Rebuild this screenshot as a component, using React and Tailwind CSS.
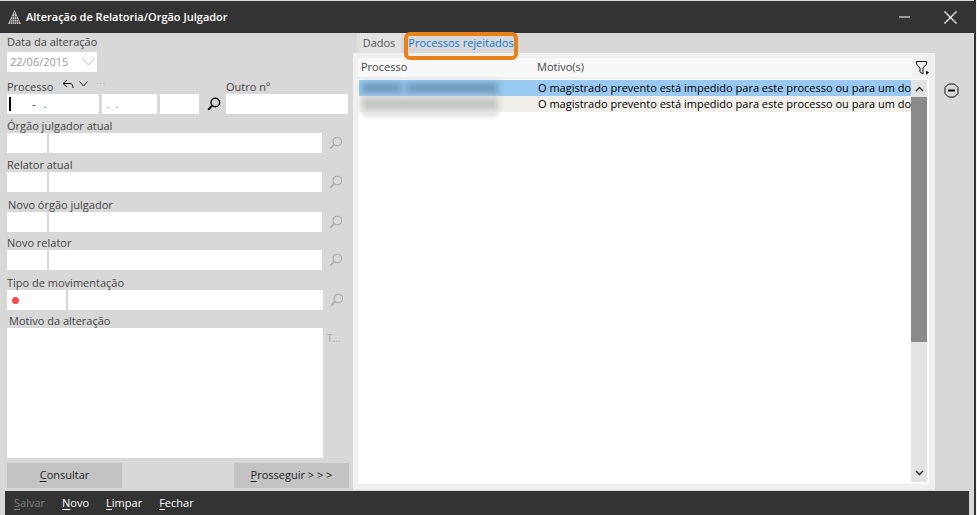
const font = { fontFamily: '"Open Sans", "Noto Sans", sans-serif' };

function Lens({ dark = false }) {
  return (
    <svg width="14" height="14" viewBox="0 0 14 14" fill="none" stroke={dark ? "#111" : "#a9a9a9"} strokeWidth={dark ? 1.4 : 1.1}>
      <circle cx="8.3" cy="5.5" r="4.3" />
      <path d="M5.2 8.6L1.2 12.8" strokeWidth={dark ? 2 : 1.6} />
    </svg>
  );
}

function Label({ children, className = "" }) {
  return <div className={`text-[11px] leading-[14px] text-[#444] whitespace-nowrap ${className}`}>{children}</div>;
}

function LookupRow({ first = "w-10", second = "w-[273px]", children }) {
  return (
    <div className="flex items-center">
      <div className={`${first} h-5 bg-white flex items-center`}>{children}</div>
      <div className={`${second} h-5 bg-white ml-0.5`} />
      <div className="ml-[7px]">
        <Lens />
      </div>
    </div>
  );
}

function U({ children }) {
  return <span className="underline underline-offset-2">{children}</span>;
}

function Row({ bg, children }) {
  return (
    <div className={`h-4 flex items-center ${bg}`}>
      <div className="w-[179px] shrink-0 pl-[3px] flex gap-1">{children}</div>
      <div className="text-[11px] leading-4 text-black whitespace-nowrap overflow-hidden">
        O magistrado prevento está impedido para este processo ou para um dos
      </div>
    </div>
  );
}

export default function App() {
  return (
    <div className="w-[977px] h-[515px] bg-[#f4f4f4] overflow-hidden" style={font}>
      <div className="w-[976px] h-[515px] border-r-2 border-[#333] bg-[#d8d8d8] flex flex-col">
        {/* title bar */}
        <div className="h-8 mt-px bg-[#333333] flex items-center shrink-0 pl-2 text-white">
          <svg width="13" height="14" viewBox="0 0 13 14" fill="#bdbdbd">
            <path d="M6.5 0L13 14H0Z" />
            <path d="M6.5 2V14M4.5 6V14M8.5 6V14M2.5 10V14M10.5 10V14M4 6.5H9M2.5 9.5H10.5M1.5 12H11.5" stroke="#555" strokeWidth="0.7" />
          </svg>
          <span className="ml-[5px] text-[11px] font-semibold">Alteração de Relatoria/Orgão Julgador</span>
          <svg className="ml-auto" width="11" height="2" viewBox="0 0 11 2">
            <path d="M0 1H11" stroke="#fff" strokeWidth="1" />
          </svg>
          <svg className="ml-[34px] mr-[17px]" width="13" height="13" viewBox="0 0 13 13">
            <path d="M0.5 0.5L12.5 12.5M12.5 0.5L0.5 12.5" stroke="#fff" strokeWidth="1.2" />
          </svg>
        </div>

        <div className="flex flex-1 min-h-0">
          {/* left form */}
          <div className="w-[353px] shrink-0 pl-[7px] pt-0.5">
            <Label>Data da alteração</Label>
            <div className="w-[90px] h-5 bg-white mt-[3px] flex items-center justify-between pl-[3px] pr-[2px] text-[11px] text-[#9a9a9a]">
              22/06/2015
              <svg width="13" height="8" viewBox="0 0 13 8" fill="none" stroke="#c4c4c4">
                <path d="M1 1L6.5 7L12 1" />
              </svg>
            </div>

            <div className="flex h-[22px] items-end">
              <Label className="w-[55px]">Processo</Label>
              <svg className="mb-[5px]" width="13" height="10" viewBox="0 0 13 10" fill="none" stroke="#111" strokeWidth="1">
                <path d="M5 1L1 4.5L5 8M1 4.5H8Q11 4.5 11 9" />
              </svg>
              <svg className="ml-1 mb-[7px]" width="9" height="6" viewBox="0 0 9 6" fill="none" stroke="#222">
                <path d="M0.5 0.5L4.5 5L8.5 0.5" />
              </svg>
              <span className="w-[138px] pl-2 mb-[4px] text-[9px] leading-3 tracking-[1px] text-[#a8a8a8]">···</span>
              <Label>Outro nº</Label>
            </div>
            <div className="flex items-center">
              <div className="w-[92px] h-5 bg-white flex items-center pl-[2px] text-[11px] text-[#333]">
                <div className="w-0.5 h-3.5 bg-black" />
                <span className="ml-[21px]">-</span>
                <span className="ml-2 text-[#0a6ab0]">.</span>
              </div>
              <div className="w-[55px] h-5 bg-white ml-[3px] pl-[5px] text-[11px] leading-5 text-[#888]">.&nbsp;&nbsp;.</div>
              <div className="w-[39px] h-5 bg-white ml-[3px]" />
              <div className="ml-2">
                <Lens dark />
              </div>
              <div className="w-[122px] h-5 bg-white ml-[5px]" />
            </div>

            <Label className="mt-[5px]">Órgão julgador atual</Label>
            <LookupRow />
            <Label className="mt-[5px]">Relator atual</Label>
            <LookupRow />
            <Label className="mt-[6px] ml-px">Novo órgão julgador</Label>
            <LookupRow />
            <Label className="mt-[4px]">Novo relator</Label>
            <LookupRow />
            <Label className="mt-[6px]">Tipo de movimentação</Label>
            <LookupRow first="w-[59px]" second="w-[255px]">
              <div className="ml-[5px] w-[7px] h-[7px] rounded-full bg-[#f9474e]" />
            </LookupRow>
            <Label className="mt-[4px] ml-0.5">Motivo da alteração</Label>
            <div className="flex">
              <div className="w-[316px] h-[130px] bg-white" />
              <div className="ml-[4px] mt-[4px] text-[10px] leading-3 text-[#a8a8a8]">T...</div>
            </div>
            <div className="flex justify-between w-[342px] mt-[5px]">
              <div className="w-[115px] h-[25px] bg-[#c3c3c3] flex items-center justify-center text-[11px] text-[#222]">
                <span>
                  <U>C</U>onsultar
                </span>
              </div>
              <div className="w-[115px] h-[25px] bg-[#c3c3c3] flex items-center justify-center text-[11px] text-[#222]">
                <span>
                  <U>P</U>rosseguir &gt; &gt; &gt;
                </span>
              </div>
            </div>
          </div>

          {/* right panel */}
          <div className="relative w-[582px] shrink-0 flex flex-col">
            <div className="h-5 flex shrink-0">
              <div className="w-11 ml-1 bg-[#e2e2e2] flex items-center justify-center text-[11px] text-[#555]">Dados</div>
            </div>
            <div className="h-[437px] bg-[#f0f0f0] pt-[5px] pl-[5px] pr-1.5 flex flex-col">
              <div className="h-[19px] w-[554px] bg-[#f8f8f8] flex items-center text-[11px] text-[#444]">
                <span className="w-[179px] pl-[3px]">Processo</span>
                <span>Motivo(s)</span>
              </div>
              <div className="mt-0.5 h-[405px] bg-white border border-r-2 border-[#fafafa] flex">
                <div className="flex-1 min-w-0">
                  <Row bg="bg-[#99c9f0]">
                    <div className="w-10 h-2.5 blur-[3px] bg-[#6f98ba]" />
                    <div className="w-[92px] h-2.5 blur-[3px] bg-[#6f98ba]" />
                  </Row>
                  <Row bg="bg-[#f0efea]">
                    <div className="w-[136px] h-3 blur-[3px] bg-[#c2c2c2]" />
                  </Row>
                  <div className="ml-[3px] w-[136px] h-1 blur-[2px] bg-[#dcdcdc]" />
                </div>
                <div className="w-4 shrink-0 bg-[#e3e3e3] flex flex-col mb-px">
                  <div className="h-[17px] flex items-center justify-center">
                    <svg width="9" height="6" viewBox="0 0 9 6" fill="none" stroke="#222" strokeWidth="1.4">
                      <path d="M1 5L4.5 1.5L8 5" />
                    </svg>
                  </div>
                  <div className="h-[245px] bg-[#8a8a8a]" />
                  <div className="mt-auto h-[18px] flex items-center justify-center">
                    <svg width="9" height="6" viewBox="0 0 9 6" fill="none" stroke="#222" strokeWidth="1.4">
                      <path d="M1 1L4.5 4.5L8 1" />
                    </svg>
                  </div>
                </div>
              </div>
            </div>
            {/* filter button over the header */}
            <svg className="absolute left-[563px] top-7" width="13" height="14" viewBox="0 0 13 14" fill="none" stroke="#111">
              <path d="M0.5 0.5H10.5V3L7 7V13L4 11V7L0.5 3Z" />
              <path d="M10 9.5L13 11.5L10 14Z" fill="#111" stroke="none" />
            </svg>
            {/* highlight round the active tab */}
            <div className="absolute left-[51px] -top-px w-[114px] h-[28px] rounded-[6px] border-4 border-[#e8811a] flex justify-center text-[11px] leading-[14px] text-[#0a78d7] whitespace-nowrap">
              Processos rejeitados
            </div>
          </div>

          <div className="pl-[9px] pt-[50px]">
            <svg width="15" height="15" viewBox="0 0 15 15" fill="none" stroke="#111">
              <path d="M4.5 1H10.5L14 4.5V10.5L10.5 14H4.5L1 10.5V4.5Z" />
              <path d="M4 7.5H11" strokeWidth="2" />
            </svg>
          </div>
        </div>

        {/* bottom bar */}
        <div className="h-6 ml-[5px] mr-[5px] bg-[#333333] shrink-0 flex items-center pl-[9px] text-[11px] text-white">
          <span className="text-[#7d7d7d]">
            <U>S</U>alvar
          </span>
          <span className="ml-[17px]">
            <U>N</U>ovo
          </span>
          <span className="ml-[17px]">
            <U>L</U>impar
          </span>
          <span className="ml-[17px]">
            <U>F</U>echar
          </span>
        </div>
      </div>
    </div>
  );
}
